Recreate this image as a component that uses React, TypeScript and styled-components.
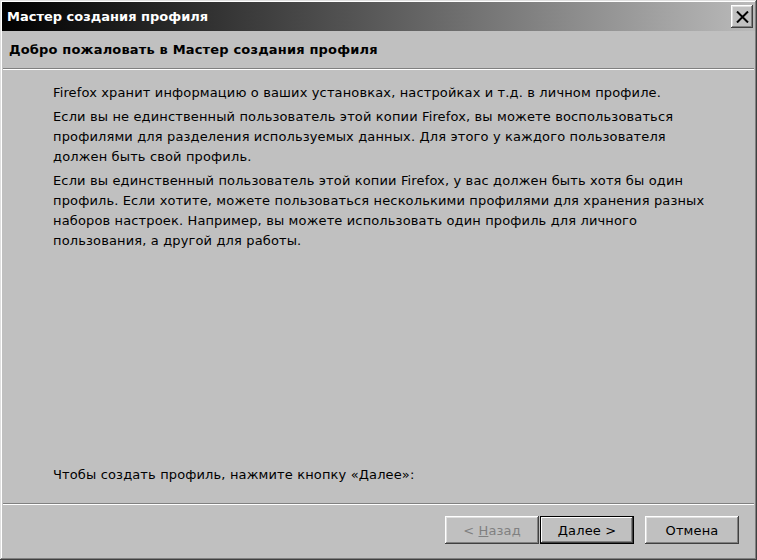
import styled, { createGlobalStyle } from "styled-components";

const GlobalStyle = createGlobalStyle`
  html, body {
    margin: 0;
    padding: 0;
    background: #c0c0c0;
  }
  body {
    font-family: "DejaVu Sans", "Noto Sans", sans-serif;
    font-size: 13px;
    color: #000;
  }
`;

const Window = styled.div`
  width: 757px;
  height: 560px;
  box-sizing: border-box;
  padding: 2px;
  background: #c0c0c0;
  box-shadow: inset -1px -1px #404040, inset 1px 1px #dfdfdf, inset -2px -2px #808080, inset 2px 2px #ffffff;
  display: flex;
  flex-direction: column;
`;

const TitleBar = styled.div`
  height: 29px;
  flex: none;
  display: flex;
  align-items: center;
  justify-content: space-between;
  padding: 0 2px 0 5px;
  background: linear-gradient(to right, #000000 0%, #5a5a5a 50%, #bababa 100%);
`;

const TitleText = styled.span`
  color: #fff;
  font-weight: bold;
  font-size: 13px;
`;

const CloseButton = styled.button`
  width: 22px;
  height: 23px;
  padding: 0;
  border: none;
  background: #c0c0c0;
  box-shadow: inset -1px -1px #404040, inset 1px 1px #ffffff, inset -2px -2px #808080, inset 2px 2px #dfdfdf;
  display: flex;
  align-items: center;
  justify-content: center;
`;

const Header = styled.div`
  height: 37px;
  flex: none;
  display: flex;
  align-items: center;
  padding-left: 7px;
  font-weight: bold;
  letter-spacing: 0.17px;
`;

const Separator = styled.div`
  flex: none;
  height: 2px;
  margin: 0 1px;
  border-top: 1px solid #808080;
  border-bottom: 1px solid #ffffff;
  box-sizing: border-box;
`;

const Content = styled.div`
  flex: 1;
  display: flex;
  flex-direction: column;
  padding: 13px 20px 18px 51px;
  line-height: 20px;
  letter-spacing: 0.14px;
`;

const Paragraph = styled.p`
  margin: 0 0 4px;
`;

const Line = styled.span`
  display: block;
  white-space: nowrap;
`;

const Prompt = styled.p`
  margin: auto 0 0;
`;

const Footer = styled.div`
  flex: none;
  display: flex;
  justify-content: flex-end;
  align-items: flex-start;
  padding: 11px 16px 14px 0;
`;

const ButtonGroup = styled.div`
  display: flex;
  gap: 1px;
  margin-right: 11px;
`;

const Button = styled.button<{ $default?: boolean }>`
  width: 94px;
  height: 28px;
  font-family: inherit;
  font-size: 13px;
  letter-spacing: 0.14px;
  color: ${(p) => (p.disabled ? "#808080" : "#000")};
  background: #c0c0c0;
  border: none;
  padding: 0;
  box-shadow: ${(p) =>
    p.$default
      ? "inset 0 0 0 1px #000, inset -2px -2px #404040, inset 2px 2px #ffffff, inset -3px -3px #808080"
      : "inset -1px -1px #404040, inset 1px 1px #ffffff, inset -2px -2px #808080, inset 2px 2px #dfdfdf"};
`;

const Key = styled.span`
  text-decoration: underline;
`;

export default function App() {
  return (
    <>
      <GlobalStyle />
      <Window>
        <TitleBar>
          <TitleText>Мастер создания профиля</TitleText>
          <CloseButton aria-label="Закрыть">
            <svg width="13" height="12" viewBox="0 0 13 12">
              <path d="M1 0.5 L12 11.5 M12 0.5 L1 11.5" stroke="#000" strokeWidth="2" />
            </svg>
          </CloseButton>
        </TitleBar>
        <Header>Добро пожаловать в Мастер создания профиля</Header>
        <Separator />
        <Content>
          <Paragraph>
            <Line>Firefox хранит информацию о ваших установках, настройках и т.д. в личном профиле.</Line>
          </Paragraph>
          <Paragraph>
            <Line>Если вы не единственный пользователь этой копии Firefox, вы можете воспользоваться</Line>
            <Line>профилями для разделения используемых данных. Для этого у каждого пользователя</Line>
            <Line>должен быть свой профиль.</Line>
          </Paragraph>
          <Paragraph>
            <Line>Если вы единственный пользователь этой копии Firefox, у вас должен быть хотя бы один</Line>
            <Line>профиль. Если хотите, можете пользоваться несколькими профилями для хранения разных</Line>
            <Line>наборов настроек. Например, вы можете использовать один профиль для личного</Line>
            <Line>пользования, а другой для работы.</Line>
          </Paragraph>
          <Prompt>Чтобы создать профиль, нажмите кнопку «Далее»:</Prompt>
        </Content>
        <Separator />
        <Footer>
          <ButtonGroup>
            <Button disabled>
              &lt; <Key>Н</Key>азад
            </Button>
            <Button $default>
              <Key>Д</Key>алее &gt;
            </Button>
          </ButtonGroup>
          <Button>Отмена</Button>
        </Footer>
      </Window>
    </>
  );
}
